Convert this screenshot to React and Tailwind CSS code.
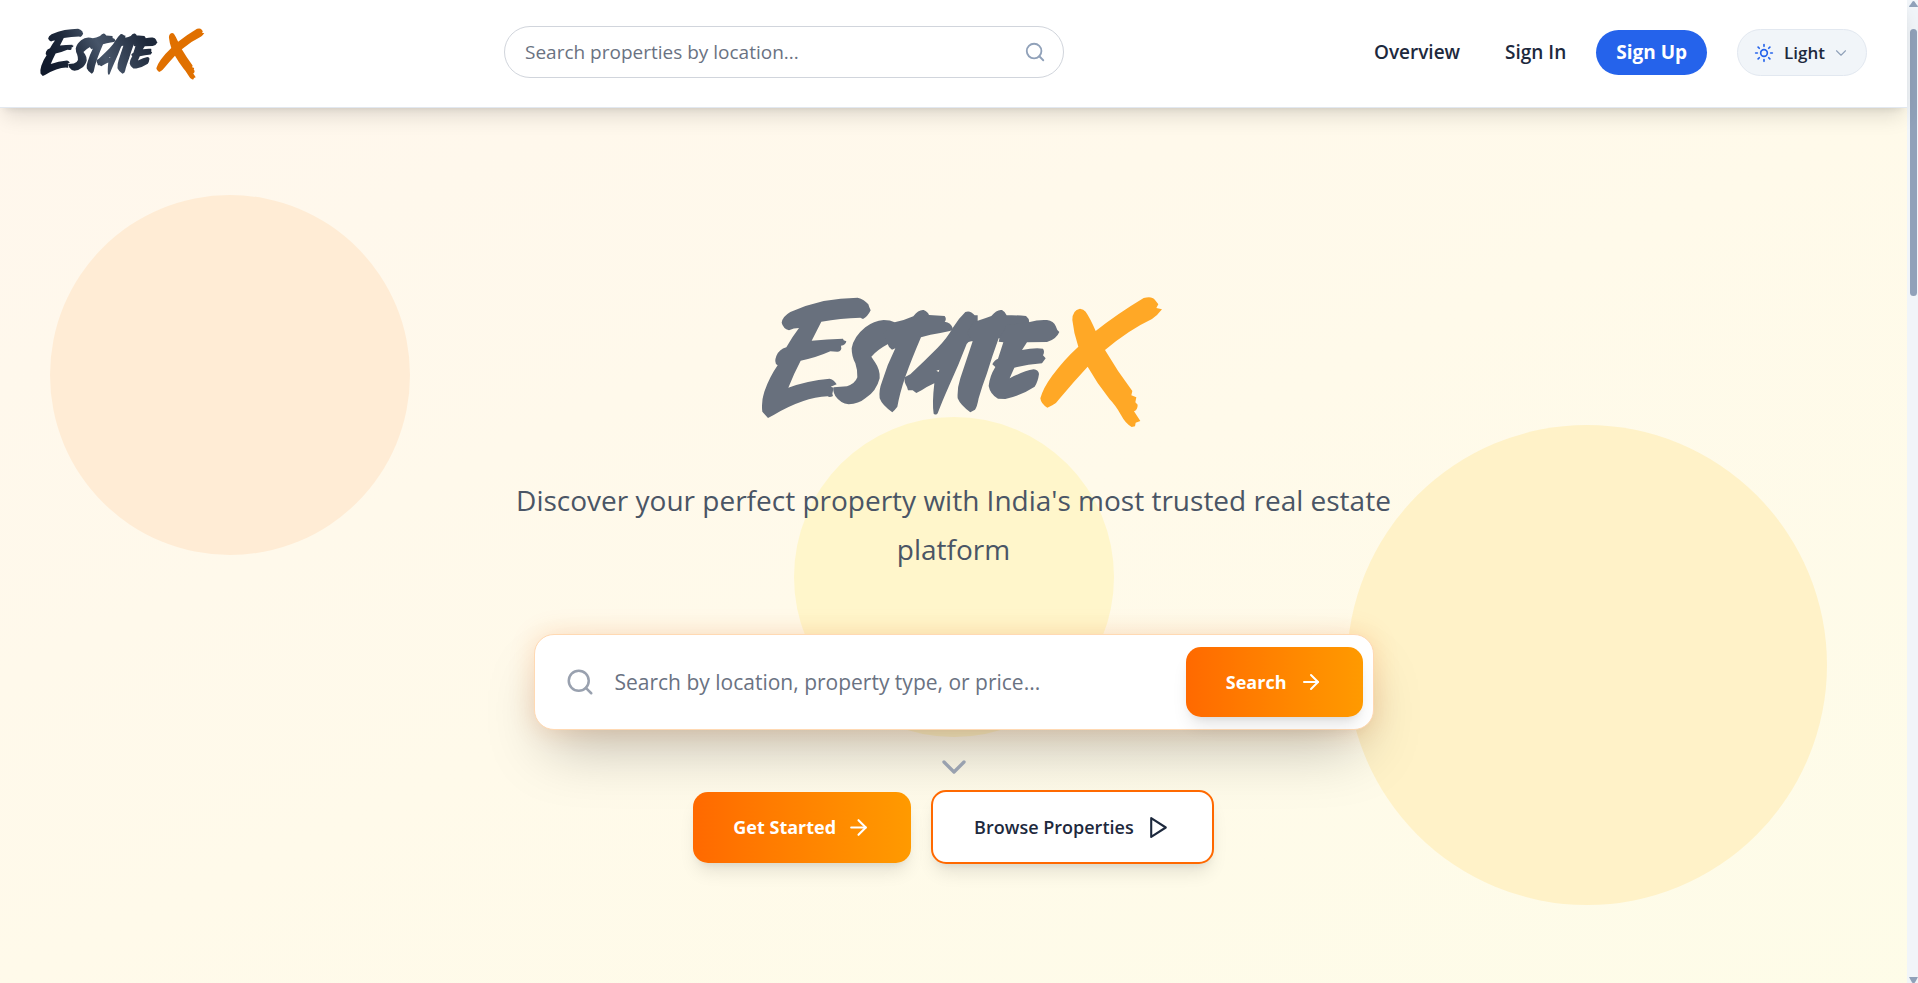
import { ArrowRight, ChevronDown, Search, Sun } from "lucide-react";

const WORD_PATHS = [
  "M83,444 L66,425 Q62,395 72,365 Q88,320 112,286 Q100,280 108,258 Q116,238 138,232 Q156,200 176,174 Q160,174 146,181 Q128,175 124,158 Q126,140 150,126 Q200,104 250,93 Q300,84 352,83 Q372,88 384,103 L387,112 L391,121 Q382,140 368,147 L360,143 Q300,144 243,155 L214,212 Q260,207 308,206 L310,211 L318,214 Q316,226 302,227 L303,236 Q300,246 290,245 L270,244 Q225,264 181,272 Q160,312 144,353 Q200,332 268,326 Q282,330 289,343 L271,350 L280,353 L276,371 L278,378 Q268,383 262,379 Q190,382 100,435 Z",
  "M463,157 Q450,150 430,150 Q400,152 375,172 Q340,200 334,235 Q334,260 345,280 Q352,300 351,322 Q345,340 320,349 L280,352 Q276,362 285,378 Q300,400 325,403 Q355,402 375,385 Q408,365 418,325 Q420,300 405,278 L393,260 Q410,240 443,222 L490,200 Z",
  "M463,157 Q490,152 519,139 Q535,118 550,120 Q563,126 566,135 Q590,137 613,138 Q620,148 613,155 Q632,158 637,174 Q638,181 625,184 L600,189 Q570,193 542,202 Q515,265 495,320 Q478,370 471,410 L463,420 L456,427 Q425,405 418,385 Q415,360 425,335 Q440,285 465,235 L455,239 Q445,234 442,222 L430,190 Z",
  "M637,174 Q655,145 675,126 Q690,120 703,136 L712,136 L712,152 L735,180 L697,214 Q684,212 679,222 Q655,285 625,350 Q605,395 592,430 Q588,437 580,431 Q575,400 582,340 Q560,350 545,360 L528,369 L517,361 L503,361 L500,351 Q490,335 493,322 L510,313 Q555,270 592,233 Q620,205 637,174 Z M588,302 L595,306 L597,299 Z",
  "M700,155 L712,152 Q735,145 753,138 Q770,117 785,120 Q797,127 799,136 Q830,135 857,138 Q868,147 866,157 L890,180 L860,210 L775,205 Q755,260 740,310 Q725,350 715,385 Q710,412 704,419 L690,427 Q660,405 652,385 Q650,355 660,325 Q680,265 697,214 L680,190 Z",
  "M865,157 Q895,148 920,150 Q940,153 946,168 L951,180 L957,186 Q948,208 920,216 L860,217 L845,240 Q880,233 908,236 Q914,245 908,256 L916,265 L905,280 Q860,284 822,293 L808,325 Q850,303 880,298 Q895,300 896,312 Q893,335 883,350 Q840,378 795,387 L773,386 Q750,374 745,348 Q748,318 765,291 L756,283 Q760,272 773,266 L789,217 L775,215 L778,203 L800,165 Z",
];

const X_PATH =
  "M1019,116 Q1030,117 1036,125 Q1050,145 1066,183 Q1130,132 1210,84 Q1235,77 1244,90 L1254,103 L1248,114 L1265,118 Q1250,138 1235,147 Q1165,180 1094,240 Q1130,302 1176,363 L1173,376 L1188,382 L1185,397 L1192,404 Q1192,420 1181,424 L1200,453 L1186,458 L1184,469 L1174,471 Q1155,460 1142,435 Q1125,405 1108,388 Q1070,340 1042,290 Q1000,335 960,383 Q948,400 936,406 L921,413 Q902,402 900,385 Q908,355 935,318 Q970,270 1014,230 Q1000,190 996,150 Q996,120 1019,116 Z";

function Logo({ className, wordFill, xClassName, gap = 0 }) {
  return (
    <svg
      viewBox={`62 78 ${1206 + gap} 396`}
      className={className}
      role="img"
      aria-label="EstateX"
    >
      <defs>
        <linearGradient
          id="ink"
          gradientUnits="userSpaceOnUse"
          x1="160"
          y1="420"
          x2="820"
          y2="80"
        >
          <stop offset="0" stopColor="#111a2c" />
          <stop offset="0.25" stopColor="#1e293b" />
          <stop offset="0.55" stopColor="#475569" />
          <stop offset="1" stopColor="#1e293b" />
        </linearGradient>
      </defs>
      <g fill={wordFill} fillRule="evenodd">
        {WORD_PATHS.map((d) => (
          <path key={d} d={d} />
        ))}
      </g>
      <path d={X_PATH} className={xClassName} transform={`translate(${gap} 0)`} />
    </svg>
  );
}

function PlayOutline() {
  return (
    <svg
      viewBox="0 0 24 24"
      className="size-[25px] fill-none stroke-current stroke-2"
      strokeLinecap="round"
      strokeLinejoin="round"
      aria-hidden="true"
    >
      <polygon points="5 3 19 12 5 21 5 3" />
    </svg>
  );
}

function Header() {
  return (
    <header className="relative z-10 flex h-[108px] items-center border-b border-slate-200 bg-white px-10 pb-1 shadow-[0_12px_20px_-4px_rgba(0,0,0,0.12),0_5px_8px_-5px_rgba(0,0,0,0.12)]">
      <a href="#home" className="w-[464px] pt-1">
        <Logo className="h-[52px]" wordFill="url(#ink)" xClassName="fill-[#e07000]" gap={48} />
      </a>
      <form className="relative w-[560px]" onSubmit={(e) => e.preventDefault()}>
        <input
          type="text"
          aria-label="Search properties by location"
          placeholder="Search properties by location..."
          className="h-[52px] w-full rounded-full border border-gray-300 bg-white pr-14 pl-5 text-[19px] text-slate-800 outline-none placeholder:text-gray-500"
        />
        <button
          type="submit"
          aria-label="Search"
          className="absolute inset-y-0 right-[18px] flex items-center text-slate-400"
        >
          <Search size={22} strokeWidth={2} />
        </button>
      </form>
      <nav className="ml-auto flex items-center pt-[2px] text-[19px] font-semibold text-slate-800">
        <a href="#overview" className="mr-[45px]">Overview</a>
        <a href="#signin" className="mr-[30px]">Sign In</a>
        <a
          href="#signup"
          className="mr-[30px] flex h-[45px] items-center rounded-full bg-[#2563eb] px-5 font-bold text-white"
        >
          Sign Up
        </a>
        <button
          type="button"
          className="flex h-[47px] items-center rounded-full border border-slate-200 bg-slate-100 px-4 text-[17px]"
        >
          <Sun size={20} className="mr-[10px] text-[#2563eb]" />
          Light
          <ChevronDown size={18} strokeWidth={1.5} className="ml-[7px] text-slate-400" />
        </button>
      </nav>
    </header>
  );
}

function Hero() {
  return (
    <section className="relative flex flex-1 flex-col items-center overflow-hidden bg-linear-to-br from-orange-50 via-[#fffaea] to-yellow-50 pt-[188px] pb-[118px]">
      <div className="absolute top-[87px] left-[50px] size-[360px] rounded-full bg-[#ffecd5]" />
      <div className="absolute right-20 bottom-[78px] size-[480px] rounded-full bg-[#fff2c8]" />
      <div className="absolute top-[309px] left-1/2 size-80 -translate-x-1/2 rounded-full bg-[#fff6cb]" />

      <div className="relative flex w-full flex-col items-center">
        <h1 className="pl-4">
          <Logo className="h-[132px]" wordFill="#68707d" xClassName="fill-[#ffa826]" />
        </h1>
        <p className="mt-12 max-w-[940px] text-center text-[28px] leading-[49px] text-gray-600">
          Discover your perfect property with India's most trusted real estate platform
        </p>

        <form
          onSubmit={(e) => e.preventDefault()}
          className="mt-[60px] flex h-24 w-full max-w-[840px] items-center rounded-[20px] border border-[#ffd9b3] bg-white pr-[10px] pl-[30px] shadow-[0_30px_60px_-14px_rgba(0,0,0,0.25),0_0_26px_rgba(255,105,0,0.18)]"
        >
          <Search size={30} className="shrink-0 text-gray-400" />
          <input
            type="text"
            aria-label="Search by location, property type, or price"
            placeholder="Search by location, property type, or price..."
            className="ml-5 h-full min-w-0 flex-1 bg-transparent text-[21px] text-slate-800 outline-none placeholder:text-gray-500"
          />
          <button
            type="submit"
            className="flex h-[70px] items-center gap-3 rounded-[15px] bg-linear-to-r from-[#ff6900] to-[#ff9a00] px-10 text-[18px] font-bold text-white shadow-[0_12px_18px_-4px_rgba(0,0,0,0.1),0_5px_8px_-5px_rgba(0,0,0,0.1)]"
          >
            Search
            <ArrowRight size={24} />
          </button>
        </form>

        <ChevronDown size={40} className="mt-[17px] text-gray-400" />

        <div className="mt-[3px] flex items-center gap-5">
          <button
            type="button"
            className="flex h-[71px] items-center gap-[10px] rounded-[15px] bg-linear-to-r from-[#ff6900] to-[#ff9a00] px-10 text-[18px] font-bold text-white shadow-[0_12px_18px_-4px_rgba(0,0,0,0.1),0_5px_8px_-5px_rgba(0,0,0,0.1)]"
          >
            Get Started
            <ArrowRight size={25} />
          </button>
          <button
            type="button"
            className="flex h-[74px] items-center gap-3 rounded-[15px] border-2 border-[#ff6900] bg-white px-[41px] text-[18px] font-semibold text-slate-800 shadow-[0_12px_18px_-4px_rgba(0,0,0,0.1),0_5px_8px_-5px_rgba(0,0,0,0.1)]"
          >
            Browse Properties
            <PlayOutline />
          </button>
        </div>
      </div>
    </section>
  );
}

function ScrollRail() {
  return (
    <div className="sticky top-0 flex h-screen w-[11px] flex-col items-center bg-slate-100 pt-px pl-[2px]">
      <svg viewBox="0 0 9 6" className="h-[6px] w-[9px] shrink-0 fill-slate-400">
        <path d="M0 6 Q0 4.500 1.500 3.500 L3.500 0.500 Q4.500 -0.300 5.500 0.500 L7.500 3.500 Q9 4.500 9 6 Z" />
      </svg>
      <div className="mt-[22px] h-[267px] w-[7px] rounded-full bg-slate-400" />
      <svg viewBox="0 0 9 6" className="mt-auto h-[6px] w-[9px] shrink-0 fill-slate-400">
        <path d="M0 0 H9 L6 5.500 Q4.500 6.500 3 5.500 Z" />
      </svg>
    </div>
  );
}

export default function App() {
  return (
    <div className="flex min-h-screen font-['Open_Sans','Noto_Sans',sans-serif]">
      <div className="flex min-w-0 flex-1 flex-col">
        <Header />
        <Hero />
      </div>
      <ScrollRail />
    </div>
  );
}
